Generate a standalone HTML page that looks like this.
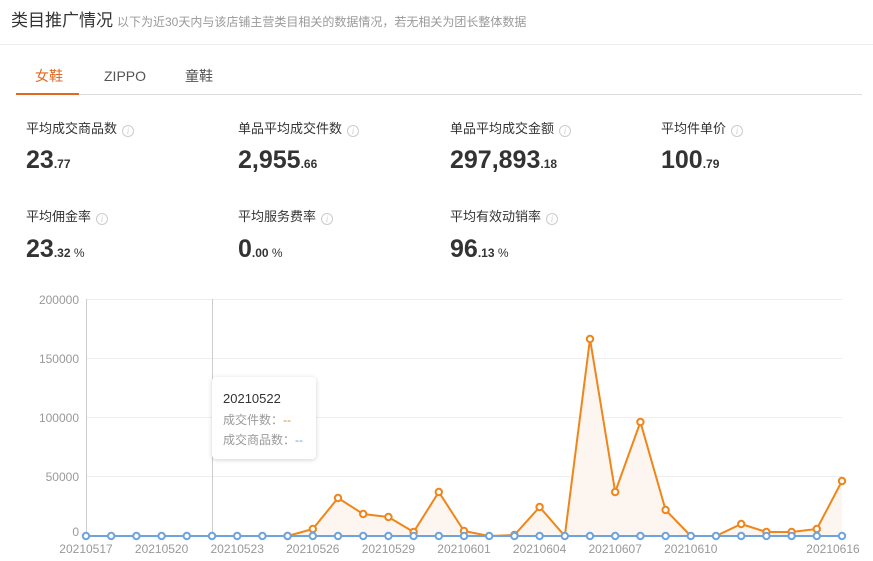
<!DOCTYPE html>
<html><head><meta charset="utf-8"><style>
*{margin:0;padding:0;box-sizing:border-box}
body{width:873px;height:561px;background:#fff;font-family:"Liberation Sans","Noto Sans CJK SC",sans-serif;position:relative;overflow:hidden;color:#333}
.abs{position:absolute;white-space:nowrap}
.t1{left:11px;top:6px;font-size:17px;color:#333}
.t1 span{font-size:12px;color:#999;margin-left:4px}
.hr{left:0;top:44px;width:873px;height:1px;background:#eee}
.tab{top:66px;font-size:14px;color:#555}
.tabline{left:16px;top:94px;width:846px;height:1px;background:#ddd}
.tabact{left:16px;top:93px;width:63px;height:2px;background:#e2691f}
.lab{font-size:13px;color:#333}
.i{display:inline-block;width:12px;height:12px;border:1px solid #ccc;border-radius:50%;font-size:9px;color:#ccc;text-align:center;line-height:10px;font-style:italic;margin-left:5px;vertical-align:-1px;font-family:"Liberation Serif",serif}
.val{font-size:25px;font-weight:bold;color:#333}
.val small{font-size:12px}
.val em{font-style:normal;font-size:12px;font-weight:normal}
.tip{left:212px;top:377px;width:104px;height:82px;background:#fff;border-radius:4px;box-shadow:0 1px 5px rgba(0,0,0,.18);padding:12px 0 0 11px;font-size:12px;color:#999;line-height:20px}
.tip b{color:#333;font-size:13px;font-weight:normal;display:block;margin-bottom:1px}
</style></head><body>
<div class="abs t1">类目推广情况<span>以下为近30天内与该店铺主营类目相关的数据情况，若无相关为团长整体数据</span></div>
<div class="abs hr"></div>
<div class="abs tab" style="left:35px;color:#e2691f">女鞋</div>
<div class="abs tab" style="left:104px;top:68px">ZIPPO</div>
<div class="abs tab" style="left:185px">童鞋</div>
<div class="abs tabline"></div><div class="abs tabact"></div>

<div class="abs lab" style="left:26px;top:118px">平均成交商品数<i class="i">i</i></div>
<div class="abs lab" style="left:238px;top:118px">单品平均成交件数<i class="i">i</i></div>
<div class="abs lab" style="left:450px;top:118px">单品平均成交金额<i class="i">i</i></div>
<div class="abs lab" style="left:661px;top:118px">平均件单价<i class="i">i</i></div>
<div class="abs val" style="left:26px;top:146px">23<small>.77</small></div>
<div class="abs val" style="left:238px;top:146px">2,955<small>.66</small></div>
<div class="abs val" style="left:450px;top:146px">297,893<small>.18</small></div>
<div class="abs val" style="left:661px;top:146px">100<small>.79</small></div>
<div class="abs lab" style="left:26px;top:206px">平均佣金率<i class="i">i</i></div>
<div class="abs lab" style="left:238px;top:206px">平均服务费率<i class="i">i</i></div>
<div class="abs lab" style="left:450px;top:206px">平均有效动销率<i class="i">i</i></div>
<div class="abs val" style="left:26px;top:235px">23<small>.32</small><em> %</em></div>
<div class="abs val" style="left:238px;top:235px">0<small>.00</small><em> %</em></div>
<div class="abs val" style="left:450px;top:235px">96<small>.13</small><em> %</em></div>

<svg class="abs" style="left:0;top:0" width="873" height="561" id="ch">
<g stroke="#eee" stroke-width="1">
<line x1="86" y1="299.5" x2="842" y2="299.5"/><line x1="86" y1="358.5" x2="842" y2="358.5"/>
<line x1="86" y1="417.5" x2="842" y2="417.5"/><line x1="86" y1="476.5" x2="842" y2="476.5"/>
</g>
<g stroke="#ccc"><line x1="86.5" y1="299" x2="86.5" y2="536"/><line x1="212.5" y1="299" x2="212.5" y2="536"/></g>
<g font-size="12" fill="#999" text-anchor="end" font-family="Liberation Sans">
<text x="79" y="304">200000</text><text x="79" y="363">150000</text><text x="79" y="422">100000</text><text x="79" y="481">50000</text><text x="79" y="536">0</text>
</g>
<g font-size="12" fill="#999" text-anchor="middle" font-family="Liberation Sans" id="xl"></g>
<polygon id="ar" fill="#fdf5ef"/>
<polyline id="ol" fill="none" stroke="#f08519" stroke-width="2"/>
<line x1="86" y1="536" x2="842" y2="536" stroke="#6fa3dc" stroke-width="2"/>
<g id="pts"></g>
</svg>
<div class="abs tip"><b>20210522</b>成交件数：<span style="color:#f08519">--</span><br>成交商品数：<span style="color:#6fa3dc">--</span></div>
<script>
var y=[536,536,536,536,536,536,536,536,536,529,498,514,517,532,492,531,536,535,507,536,339,492,422,510,536,536,524,532,532,529,481];
var p=[],s='',lb=['20210517','20210520','20210523','20210526','20210529','20210601','20210604','20210607','20210610'];
for(var i=0;i<31;i++){var x=86+i*25.2;p.push(x+','+y[i]);
if(i>=8&&i!=16&&i!=19&&i!=24&&i!=25||i==30)s+='<circle cx="'+x+'" cy="'+y[i]+'" r="3.2" fill="#fff" stroke="#f08519" stroke-width="2"/>';
s+='<circle cx="'+x+'" cy="536" r="3.2" fill="#fff" stroke="#6fa3dc" stroke-width="2"/>';}
document.getElementById('ol').setAttribute('points',p.join(' '));
document.getElementById('ar').setAttribute('points','86,536 '+p.join(' ')+' 842,536');
document.getElementById('pts').innerHTML=s;
var t='';for(var j=0;j<9;j++)t+='<text x="'+(86+j*3*25.2)+'" y="553">'+lb[j]+'</text>';
t+='<text x="833" y="553">20210616</text>';
document.getElementById('xl').innerHTML=t;
</script>
</body></html>
